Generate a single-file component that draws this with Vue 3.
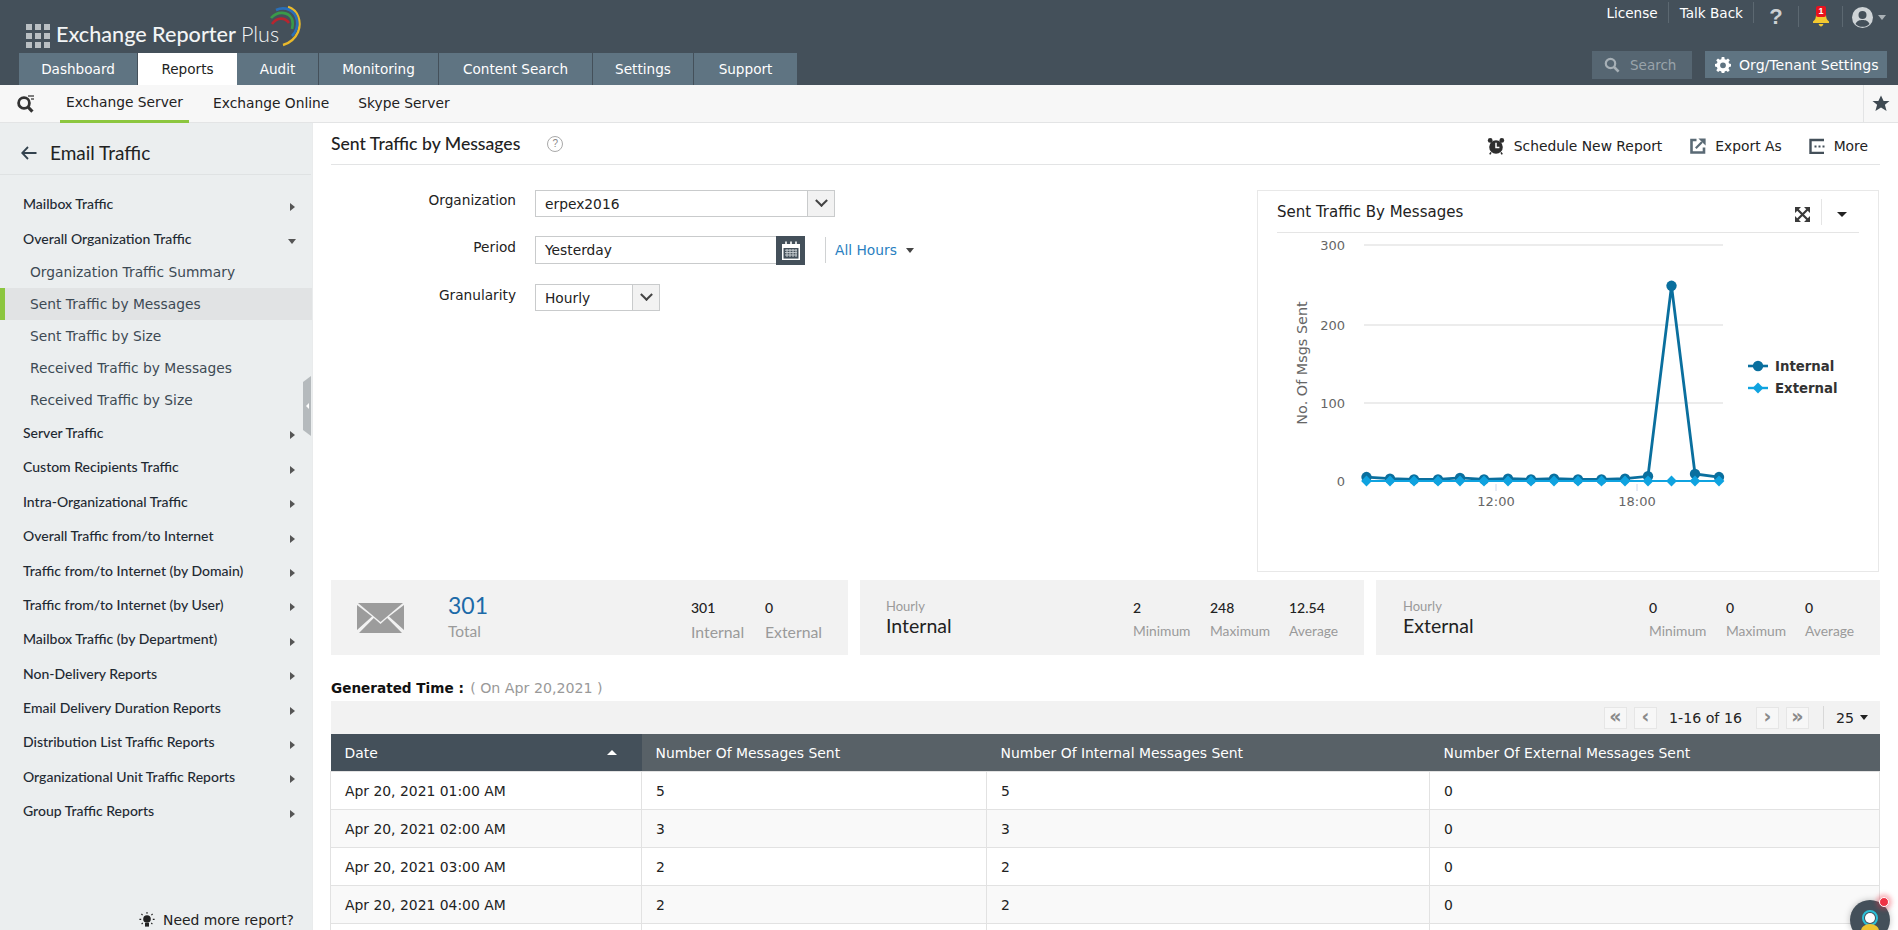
<script setup>
const tabs = ['Dashboard', 'Reports', 'Audit', 'Monitoring', 'Content Search', 'Settings', 'Support']
const subTabs = ['Exchange Server', 'Exchange Online', 'Skype Server']
const nav = [
  { t: 'Mailbox Traffic' },
  { t: 'Overall Organization Traffic', open: true, subs: ['Organization Traffic Summary', 'Sent Traffic by Messages', 'Sent Traffic by Size', 'Received Traffic by Messages', 'Received Traffic by Size'] },
  { t: 'Server Traffic' },
  { t: 'Custom Recipients Traffic' },
  { t: 'Intra-Organizational Traffic' },
  { t: 'Overall Traffic from/to Internet' },
  { t: 'Traffic from/to Internet (by Domain)' },
  { t: 'Traffic from/to Internet (by User)' },
  { t: 'Mailbox Traffic (by Department)' },
  { t: 'Non-Delivery Reports' },
  { t: 'Email Delivery Duration Reports' },
  { t: 'Distribution List Traffic Reports' },
  { t: 'Organizational Unit Traffic Reports' },
  { t: 'Group Traffic Reports' }
]
const rows = [
  ['Apr 20, 2021 01:00 AM', 5, 5, 0],
  ['Apr 20, 2021 02:00 AM', 3, 3, 0],
  ['Apr 20, 2021 03:00 AM', 2, 2, 0],
  ['Apr 20, 2021 04:00 AM', 2, 2, 0],
  ['', '', '', '']
]
const internal = [5, 3, 2, 2, 4, 2, 3, 2, 3, 2, 2, 3, 6, 248, 9, 5]
const xs = [366.5, 390, 414, 438, 460, 484, 508, 531, 554, 578, 601.5, 625, 648, 671.5, 695, 719]
const yOf = v => 481 - v * 0.787
const intPts = internal.map((v, i) => ({ x: xs[i], y: yOf(v) }))
const extPts = xs.map(x => ({ x, y: yOf(0) }))
const poly = p => p.map(o => `${o.x},${o.y}`).join(' ')
const diamond = (x, y, r) => `${x},${y - r} ${x + r},${y} ${x},${y + r} ${x - r},${y}`
const grid = [[245, '300'], [325, '200'], [403, '100'], [481, '0']]
</script>

<template>
  <div class="page">
    <header class="topbar">
      <div class="top-left">
        <div class="logo">
          <div class="dots"><i v-for="n in 9" :key="n"></i></div>
          <span class="logo-text">Exchange Reporter <em>Plus</em></span>
          <svg class="arcs" width="36" height="42" viewBox="0 0 36 42" fill="none">
            <path d="M19 2C29 5 33 17 29 27C26 34 21 38 14 40" stroke="#e9b92b" stroke-width="2.4"/>
            <path d="M7 5C16 1 26 5 28 15C29 21 27 27 23 31" stroke="#2a6fb8" stroke-width="2.6"/>
            <path d="M2 13C8 6 19 6 23 14C24 17 24 20 23 24" stroke="#3a9a4a" stroke-width="2.6"/>
            <path d="M3 19C8 12 16 12 20 18" stroke="#b8252f" stroke-width="2.6"/>
          </svg>
        </div>
        <nav class="tabs">
          <a v-for="t in tabs" :key="t" class="tab" :class="{ active: t === 'Reports' }">{{ t }}</a>
        </nav>
      </div>
      <div class="top-right">
        <div class="links">
          <span class="link">License</span>
          <span class="link">Talk Back</span>
          <span class="link help">?</span>
          <span class="link bell">
            <svg width="18" height="20" viewBox="0 0 18 20"><path d="M9 2C5.6 2 4 4.6 4 7.6C4 11.6 3 13 1 14.6V16H17V14.6C15 13 14 11.6 14 7.6C14 4.6 12.4 2 9 2Z" fill="#f4c92f"/><path d="M6.6 17H11.4C11 18.6 10 19.4 9 19.4C8 19.4 7 18.6 6.6 17Z" fill="#f4c92f"/></svg>
            <b class="badge">1</b>
          </span>
          <span class="link user">
            <svg width="21" height="21" viewBox="0 0 21 21"><circle cx="10.5" cy="10.5" r="10.5" fill="#cfd4d7"/><circle cx="10.5" cy="8" r="4" fill="#44505a"/><path d="M3.5 17C5 13.6 7.5 13 10.5 13S16 13.6 17.5 17C15.6 19 13 19.8 10.5 19.8S5.4 19 3.5 17Z" fill="#44505a"/></svg>
            <i class="caret light"></i>
          </span>
        </div>
        <div class="tools">
          <div class="search">
            <svg width="16" height="16" viewBox="0 0 16 16" fill="none"><circle cx="6.5" cy="6.5" r="4.7" stroke="#a7b0b6" stroke-width="2.2"/><path d="M10 10L14.6 14.6" stroke="#a7b0b6" stroke-width="2.6"/></svg>
            <span>Search</span>
          </div>
          <div class="org">
            <svg width="16" height="16" viewBox="0 0 16 16"><path fill="#fff" fill-rule="evenodd" d="M6.7 0H9.3L9.7 2.2L11.2 2.8L13 1.5L14.8 3.3L13.5 5.1L14.1 6.6L16 7V9.6L14.1 10L13.5 11.5L14.7 13.2L12.9 15L11.2 13.8L9.7 14.4L9.3 16H6.7L6.3 14.4L4.8 13.8L3.1 15L1.3 13.2L2.5 11.5L1.9 10L0 9.6V7L1.9 6.6L2.5 5.1L1.2 3.3L3 1.5L4.8 2.8L6.3 2.2ZM8 5.4A2.9 2.9 0 1 0 8 11.2A2.9 2.9 0 1 0 8 5.4Z"/></svg>
            <span>Org/Tenant Settings</span>
          </div>
        </div>
      </div>
    </header>

    <div class="subnav">
      <div class="subsearch">
        <svg width="20" height="19" viewBox="0 0 20 19" fill="none"><circle cx="8" cy="9" r="5.4" stroke="#333" stroke-width="2.8"/><path d="M12 13L16.4 17.6" stroke="#333" stroke-width="3.2"/><path d="M12 2H18M15 5H18" stroke="#555" stroke-width="1.3"/></svg>
      </div>
      <a v-for="(s, i) in subTabs" :key="s" class="subtab" :class="{ active: i === 0 }">{{ s }}</a>
      <div class="fav">
        <svg width="18" height="17" viewBox="0 0 18 17"><path d="M9 0.5L11.6 6H17.5L12.9 9.8L14.6 16L9 12.4L3.4 16L5.1 9.8L0.5 6H6.4Z" fill="#3f4a52"/></svg>
      </div>
    </div>

    <div class="body">
      <aside class="sidebar">
        <div class="side-head">
          <svg width="16" height="14" viewBox="0 0 16 14" fill="none"><path d="M15.5 7H1.5M7 1L1.2 7L7 13" stroke="#33424e" stroke-width="1.8"/></svg>
          <span>Email Traffic</span>
        </div>
        <ul class="menu">
          <template v-for="n in nav" :key="n.t">
            <li class="item">
              <span>{{ n.t }}</span>
              <i :class="n.open ? 'tri-down' : 'tri-right'"></i>
            </li>
            <template v-if="n.subs">
              <li v-for="s in n.subs" :key="s" class="sub" :class="{ selected: s === 'Sent Traffic by Messages' }">{{ s }}</li>
            </template>
          </template>
        </ul>
        <div class="need">
          <svg width="16" height="16" viewBox="0 0 16 16"><circle cx="8" cy="7" r="3.8" fill="#222"/><rect x="6" y="11" width="4" height="3.6" fill="#222"/><path d="M8 0V1.8M2.4 2L3.6 3.2M13.6 2L12.4 3.2M0.4 7.4H2.2M13.8 7.4H15.6M2.6 12L3.8 11M13.4 12L12.2 11" stroke="#222" stroke-width="1.1"/></svg>
          <span>Need more report?</span>
        </div>
        <div class="handle"><i></i></div>
      </aside>

      <main class="main">
        <div class="title-row">
          <h1>Sent Traffic by Messages</h1>
          <span class="q">?</span>
          <div class="actions">
            <span class="action a1">
              <svg width="18" height="18" viewBox="0 0 18 18"><circle cx="9" cy="10" r="6.8" fill="#2e2e2e"/><circle cx="3.2" cy="3.4" r="2.4" fill="#2e2e2e"/><circle cx="14.8" cy="3.4" r="2.4" fill="#2e2e2e"/><path d="M9 5.8V10.4H12.4" stroke="#fff" stroke-width="1.5" fill="none"/><path d="M4 15.4L2.8 17.4M14 15.4L15.2 17.4" stroke="#2e2e2e" stroke-width="1.6"/></svg>
              Schedule New Report
            </span>
            <span class="action a2">
              <svg width="16" height="16" viewBox="0 0 16 16" fill="none"><path d="M6.5 2H1.5V14.5H14V9.5" stroke="#5a6a75" stroke-width="2.6"/><path d="M5.8 10.2L12 4" stroke="#5a6a75" stroke-width="2.2"/><path d="M8.4 0.4H15.6V7.6Z" fill="#5a6a75"/></svg>
              Export As
            </span>
            <span class="action a3">
              <svg width="16" height="16" viewBox="0 0 16 16" fill="none"><path d="M15 2H1.5V15H15" stroke="#44505a" stroke-width="2.4"/><path d="M5.5 8.5H7.5M9.5 8.5H11.5M13.5 8.5H15.5" stroke="#44505a" stroke-width="2.2"/></svg>
              More
            </span>
          </div>
        </div>

        <section class="upper">
          <div class="form">
            <div class="frow r1">
              <label>Organization</label>
              <div class="select w1"><span>erpex2016</span><b><i class="chev"></i></b></div>
            </div>
            <div class="frow r2">
              <label>Period</label>
              <div class="period"><span>Yesterday</span></div>
              <div class="cal">
                <svg width="18" height="19" viewBox="0 0 18 19"><path d="M0 3H18V19H0Z" fill="#fff"/><path d="M1.5 7H16.5V17.6H1.5Z" fill="#44505a"/><path d="M4 0.5V4.5M9 0.5V4.5M14 0.5V4.5" stroke="#fff" stroke-width="1.6"/><path d="M3 9.2H15M3 11.6H15M3 14H15M5 8V16M8 8V16M11 8V16M14 8V16" stroke="#c7cdd1" stroke-width="1"/></svg>
              </div>
              <div class="hours"><span>All Hours</span><i class="caret dark"></i></div>
            </div>
            <div class="frow r3">
              <label>Granularity</label>
              <div class="select w2"><span>Hourly</span><b><i class="chev"></i></b></div>
            </div>
          </div>

          <div class="chart">
            <div class="chart-head">
              <span>Sent Traffic By Messages</span>
              <svg class="expand" width="15" height="15" viewBox="0 0 15 15" fill="none"><path d="M2 2L13 13M13 2L2 13" stroke="#3a3a3a" stroke-width="2.2"/><path d="M0 0H6L0 6ZM15 0V6L9 0ZM0 15V9L6 15ZM15 15H9L15 9Z" fill="#3a3a3a"/></svg>
              <i class="chart-sep"></i>
              <i class="caret black"></i>
            </div>
            <svg class="plot" width="620" height="338" viewBox="258 233 620 338">
              <line v-for="g in grid.slice(0,3)" :key="'l'+g[1]" x1="364" x2="723" :y1="g[0]" :y2="g[0]" stroke="#e6e6e6" stroke-width="1.4"/>
              <text v-for="g in grid" :key="'t'+g[1]" x="345" :y="g[0] + 5" text-anchor="end" class="tick">{{ g[1] }}</text>
              <line x1="496" x2="496" y1="484" y2="491" stroke="#ccd6eb"/>
              <line x1="637" x2="637" y1="484" y2="491" stroke="#ccd6eb"/>
              <text x="496" y="506" text-anchor="middle" class="tick">12:00</text>
              <text x="637" y="506" text-anchor="middle" class="tick">18:00</text>
              <text transform="translate(307 363) rotate(-90)" text-anchor="middle" class="axis">No. Of Msgs Sent</text>
              <polyline :points="poly(intPts)" fill="none" stroke="#0a6f9e" stroke-width="2.8"/>
              <circle v-for="(p, i) in intPts" :key="'c'+i" :cx="p.x" :cy="p.y" r="5.2" fill="#0a6f9e"/>
              <polyline :points="poly(extPts)" fill="none" stroke="#0fa3e0" stroke-width="2"/>
              <polygon v-for="(p, i) in extPts" :key="'d'+i" :points="diamond(p.x, p.y, 5.4)" fill="#0fa3e0"/>
              <line x1="748" x2="768" y1="366" y2="366" stroke="#0a6f9e" stroke-width="2.6"/>
              <circle cx="758" cy="366" r="5.2" fill="#0a6f9e"/>
              <text x="775" y="371" class="legend">Internal</text>
              <line x1="748" x2="768" y1="388" y2="388" stroke="#0fa3e0" stroke-width="2.4"/>
              <polygon :points="diamond(758, 388, 5.4)" fill="#0fa3e0"/>
              <text x="775" y="393" class="legend">External</text>
            </svg>
          </div>
        </section>

        <section class="stats">
          <div class="stat s1">
            <svg class="env" width="47" height="30" viewBox="0 0 47 30"><path d="M1 0H46L23.5 19Z" fill="#9c9c9c"/><path d="M0 2V27L15 13.5ZM47 2V27L32 13.5Z" fill="#9c9c9c"/><path d="M2 30L16.8 15L23.5 21L30.2 15L45 30Z" fill="#9c9c9c"/></svg>
            <div class="total"><strong>301</strong><small>Total</small></div>
            <div class="col c1"><b>301</b><small>Internal</small></div>
            <div class="col c2"><b>0</b><small>External</small></div>
          </div>
          <div class="stat s2">
            <div class="hourly"><small>Hourly</small><span>Internal</span></div>
            <div class="col m1"><b>2</b><small>Minimum</small></div>
            <div class="col m2"><b>248</b><small>Maximum</small></div>
            <div class="col m3"><b>12.54</b><small>Average</small></div>
          </div>
          <div class="stat s3">
            <div class="hourly"><small>Hourly</small><span>External</span></div>
            <div class="col m1"><b>0</b><small>Minimum</small></div>
            <div class="col m2"><b>0</b><small>Maximum</small></div>
            <div class="col m3"><b>0</b><small>Average</small></div>
          </div>
        </section>

        <div class="generated"><b>Generated Time :</b> <span>( On Apr 20,2021 )</span></div>

        <div class="pager">
          <span class="pbtn">«</span>
          <span class="pbtn">‹</span>
          <span class="pinfo">1-16 of 16</span>
          <span class="pbtn">›</span>
          <span class="pbtn">»</span>
          <i class="psep"></i>
          <span class="psize">25</span>
          <i class="caret black small"></i>
        </div>

        <table class="grid">
          <colgroup><col class="k1"><col class="k2"><col class="k3"><col class="k4"></colgroup>
          <thead>
            <tr>
              <th class="sorted"><span>Date</span><i class="tri-up"></i></th>
              <th>Number Of Messages Sent</th>
              <th>Number Of Internal Messages Sent</th>
              <th>Number Of External Messages Sent</th>
            </tr>
          </thead>
          <tbody>
            <tr v-for="(r, n) in rows" :key="n">
              <td v-for="(c, i) in r" :key="i">{{ c }}</td>
            </tr>
          </tbody>
        </table>
      </main>
    </div>

    <div class="bot">
      <svg width="40" height="30" viewBox="0 0 40 30"><circle cx="20" cy="20" r="20" fill="#44505a"/><circle cx="20" cy="18" r="7" fill="none" stroke="#2bc0d8" stroke-width="2"/><circle cx="20" cy="18" r="5" fill="#fff"/><ellipse cx="20" cy="31" rx="9" ry="7" fill="#eec22f"/></svg>
    </div>
    <div class="bot-dot"></div>
  </div>
</template>

<style>
html, body { margin: 0; padding: 0; background: #fff; }
</style>

<style scoped>
.page { position: relative; width: 1898px; height: 930px; overflow: hidden; display: flex; flex-direction: column; font-family: "DejaVu Sans", sans-serif; font-size: 13.8px; color: #222; }
a { cursor: pointer; }

.topbar { height: 85px; flex: none; background: #44505a; display: flex; justify-content: space-between; }
.top-left { padding-left: 19px; display: flex; flex-direction: column; }
.logo { height: 53px; display: flex; align-items: flex-start; position: relative; }
.dots { display: grid; grid-template-columns: repeat(3, 6px); grid-auto-rows: 6px; gap: 3px; margin: 24px 0 0 7px; }
.dots i { background: #b9bfc3; }
.logo-text { font-family: Lato, sans-serif; font-weight: 500; font-size: 21.6px; color: #f2f4f5; margin: 21px 0 0 6px; white-space: nowrap; }
.logo-text em { font-style: normal; font-weight: 300; }
.arcs { margin: 5px 0 0 -10px; }
.tabs { display: flex; height: 32px; }
.tab { background: #5f7482; color: #fff; display: flex; align-items: center; justify-content: center; font-size: 13.6px; border-right: 1px solid #44505a; box-sizing: border-box; }
.tab:nth-child(1) { width: 119px; }
.tab:nth-child(2) { width: 99px; background: #fff; color: #222; border-right: 0; }
.tab:nth-child(3) { width: 82px; }
.tab:nth-child(4) { width: 120px; }
.tab:nth-child(5) { width: 154px; }
.tab:nth-child(6) { width: 101px; }
.tab:nth-child(7) { width: 103px; border-right: 0; }

.top-right { display: flex; flex-direction: column; align-items: flex-end; padding-right: 11px; }
.links { display: flex; height: 25px; margin-top: 4px; align-items: center; color: #fff; }
.link { display: flex; align-items: center; justify-content: center; height: 21px; position: relative; border-right: 1px solid #5c6871; font-size: 13.6px; margin-top: -8px; }
.link:nth-child(1) { padding: 0 10px; }
.link:nth-child(2) { padding: 0 10px 0 11px; }
.help { width: 45px; box-sizing: border-box; font-size: 22px; color: #ccd0d3; font-family: "Liberation Sans", sans-serif; font-weight: 700; margin-top: 0; }
.bell { width: 44px; box-sizing: border-box; margin-top: 0; }
.badge { position: absolute; left: 17px; top: 0; width: 10px; height: 11px; background: #e8121e; border-radius: 2px; font-size: 9px; line-height: 11px; text-align: center; color: #fff; font-family: "Liberation Sans", sans-serif; }
.user { border-right: 0; width: 45px; justify-content: flex-start; padding-left: 9px; box-sizing: border-box; margin-top: 2px; margin-right: -1px; gap: 5px; }
.caret { display: block; width: 0; height: 0; border-left: 4px solid transparent; border-right: 4px solid transparent; border-top: 5px solid #333; }
.caret.light { border-top-color: #aab1b6; }
.tools { margin-top: 22px; display: flex; align-items: flex-start; gap: 13px; }
.search { width: 100px; height: 28px; background: #566672; display: flex; align-items: center; padding-left: 12px; box-sizing: border-box; gap: 10px; color: #99a3aa; font-size: 13.5px; }
.org { width: 182px; height: 27px; background: #5f7482; color: #fff; display: flex; align-items: center; padding-left: 10px; box-sizing: border-box; gap: 8px; font-size: 14.1px; white-space: nowrap; }

.subnav { height: 37px; flex: none; background: #f7f7f7; border-bottom: 1px solid #e3e4e5; box-sizing: content-box; display: flex; position: relative; }
.subsearch { width: 60px; display: flex; align-items: center; padding-left: 16px; box-sizing: border-box; }
.subtab { display: flex; align-items: center; padding: 0 7px 1px; color: #222; position: relative; white-space: nowrap; font-size: 13.8px; }
.subtab.active { padding: 0 0 1px; width: 129px; box-sizing: border-box; justify-content: center; border-bottom: 3px solid #8cc63f; height: 38px; }
.subtab:nth-child(3) { margin-left: 17px; }
.subtab:nth-child(4) { margin-left: 15px; }
.fav { margin-left: auto; width: 35px; border-left: 1px solid #e3e4e5; display: flex; align-items: center; justify-content: center; box-sizing: border-box; }

.body { flex: 1; display: flex; min-height: 0; }
.sidebar { width: 313px; flex: none; background: #ebeeef; position: relative; box-sizing: border-box; border-right: 1px solid #e9ebec; }
.side-head { height: 52px; box-sizing: border-box; border-bottom: 1px solid #dfe2e3; display: flex; align-items: center; padding: 8px 0 0 21px; gap: 13px; margin-right: 1px; }
.side-head span { font-family: Lato, sans-serif; font-size: 19px; color: #222; }
.menu { list-style: none; margin: 0; padding: 12px 0 0; font-family: Lato, sans-serif; }
.item { height: 34.4px; box-sizing: border-box; display: flex; align-items: center; justify-content: space-between; padding: 0 17px 1px 23px; font-size: 14px; color: #1f2a33; font-weight: 500; }
.sub { height: 32px; line-height: 32px; padding-left: 30px; font-family: "DejaVu Sans", sans-serif; font-size: 13.8px; color: #3d4a54; }
.sub.selected { background: #e1e3e4; box-shadow: inset 5px 0 0 #8cc63f; }
.tri-right { display: block; margin-top: 6px; width: 0; height: 0; border-top: 4px solid transparent; border-bottom: 4px solid transparent; border-left: 5px solid #555; }
.tri-down { display: block; margin: 6px -1px 0 0; width: 0; height: 0; border-left: 4px solid transparent; border-right: 4px solid transparent; border-top: 5px solid #555; }
.need { position: absolute; right: 18px; bottom: 2px; display: flex; align-items: center; gap: 8px; font-size: 13.9px; color: #222; }
.handle { position: absolute; right: 1px; top: 253px; width: 8px; height: 60px; background: #b5babd; clip-path: polygon(0 10%, 100% 0, 100% 100%, 0 90%); display: flex; align-items: center; justify-content: center; }
.handle i { display: block; width: 0; height: 0; border-top: 3px solid transparent; border-bottom: 3px solid transparent; border-right: 3px solid #fff; }

.main { flex: 1; min-width: 0; padding: 0 18px 0 18px; display: flex; flex-direction: column; overflow: hidden; }
.title-row { height: 42px; flex: none; box-sizing: border-box; border-bottom: 1px solid #e3e4e5; display: flex; align-items: center; }
h1 { margin: 0 0 1px; font-family: Lato, sans-serif; font-weight: 500; font-size: 17.6px; color: #222; }
.q { width: 14px; height: 14px; margin-left: 27px; border: 1.5px solid #a9a9a9; border-radius: 50%; font-size: 10px; line-height: 14px; text-align: center; color: #888; font-family: "Liberation Sans", sans-serif; }
.actions { display: flex; margin: 4px 12px 0 auto; }
.action { display: flex; align-items: center; gap: 9px; font-size: 13.85px; white-space: nowrap; }
.a2 { margin-left: 28px; }
.a3 { margin-left: 27px; }

.upper { display: flex; height: 382px; flex: none; margin-top: 25px; justify-content: space-between; }
.form { display: flex; flex-direction: column; }
.frow { display: flex; align-items: center; }
.frow label { width: 185px; text-align: right; margin-right: 19px; font-size: 13.7px; margin-top: -7px; }
.r1 { height: 27px; }
.r2 { height: 28px; margin-top: 19px; }
.r3 { height: 27px; margin-top: 20px; }
.r3 label { margin-top: -5px; }
.select { height: 27px; display: flex; border: 1px solid #c9cbcc; box-sizing: border-box; background: #fff; }
.select span { flex: 1; padding-left: 9px; line-height: 26px; }
.select b { width: 27px; background: #f2f2f2; border-left: 1px solid #c9cbcc; display: flex; align-items: center; justify-content: center; box-sizing: border-box; }
.w1 { width: 300px; }
.w2 { width: 125px; }
.chev { display: block; width: 9px; height: 9px; border-right: 2.6px solid #444; border-bottom: 2.6px solid #444; transform: rotate(45deg) translate(-2px, -2px); box-sizing: border-box; }
.period { width: 241px; height: 28px; border: 1px solid #c9cbcc; border-right: 0; box-sizing: border-box; padding-left: 9px; line-height: 26px; }
.cal { width: 29px; height: 29px; background: #44505a; display: flex; align-items: center; justify-content: center; }
.hours { margin-left: 20px; border-left: 1px solid #d0d2d3; height: 26px; padding-left: 9px; display: flex; align-items: center; gap: 9px; color: #2a7fc1; white-space: nowrap; }
.caret.dark { border-top-color: #444; }
.chart { width: 622px; height: 382px; margin-right: 1px; box-sizing: border-box; border: 1px solid #e8e8e8; position: relative; }
.chart-head { margin: 0 19px; height: 42px; border-bottom: 1px solid #e5e5e5; display: flex; align-items: center; color: #222; box-sizing: border-box; }
.chart-head span { flex: 1; font-size: 15px; margin-top: 1px; }
.expand { margin: 5px -1px 0 0; }
.chart-sep { width: 1px; height: 26px; background: #e5e5e5; margin: 0 0 0 12px; }
.caret.black { border-top-color: #222; margin: 5px 12px 0 15px; border-left-width: 5px; border-right-width: 5px; }
.plot { display: block; }
.tick { font: 13px "DejaVu Sans", sans-serif; fill: #666; }
.axis { font: 14.4px "DejaVu Sans", sans-serif; fill: #666; }
.legend { font: 700 13.3px "DejaVu Sans", sans-serif; fill: #333; }

.stats { margin-top: 8px; height: 75px; flex: none; display: flex; gap: 12px; }
.stat { background: #f2f2f2; position: relative; display: flex; }
.s1 { width: 517px; }
.s2 { width: 504px; }
.s3 { width: 504px; }
.stats small { display: block; color: #9a9a9a; font-family: Lato, sans-serif; font-size: 13.8px; }
.s1 small { font-size: 15.8px; }
.env { margin: 23px 0 0 26px; }
.total { margin: 10px 0 0 44px; width: 243px; }
.total strong { display: block; font-family: Lato, sans-serif; font-weight: 400; font-size: 23px; line-height: 30px; color: #1c6aa8; }
.total small { font-size: 15.5px; margin-top: 2px; }
.col { padding-top: 19px; }
.col b { display: block; font-family: Lato, sans-serif; font-weight: 500; font-size: 14px; line-height: 17px; color: #222; }
.col small { margin-top: 6px; white-space: nowrap; }
.c1 { width: 74px; }
.hourly { padding: 18px 0 0 26px; width: 247px; box-sizing: content-box; }
.s3 .hourly { padding-left: 27px; width: 246px; }
.hourly small { font-size: 13px; line-height: 16px; }
.hourly span { display: block; font-family: Lato, sans-serif; font-size: 19.5px; line-height: 24px; color: #222; }
.m1 { width: 77px; }
.m2 { width: 79px; }

.generated { height: 46px; flex: none; box-sizing: border-box; padding-top: 25px; font-size: 13.6px; white-space: nowrap; }
.generated b { font-weight: 700; color: #111; }
.generated span { color: #999; margin-left: 2px; font-size: 14.2px; }
.pager { height: 33px; flex: none; background: #f2f2f2; display: flex; align-items: center; padding-right: 12px; justify-content: flex-end; }
.pbtn { width: 23px; height: 22px; background: #f7f7f7; border: 1px solid #e6e6e6; box-sizing: border-box; display: flex; align-items: center; justify-content: center; color: #8a8a8a; font-weight: 700; font-size: 19px; line-height: 16px; margin-left: 7px; padding-bottom: 3px; }
.pinfo { margin: 0 7px 0 12px; color: #222; font-size: 14.2px; white-space: nowrap; }
.psep { width: 1px; height: 23px; background: #d8d8d8; margin: 0 12px 0 14px; }
.psize { color: #222; font-size: 14.2px; }
.caret.small { margin: 0 0 0 6px; border-top-color: #222; border-left-width: 4px; border-right-width: 4px; }

table.grid { border-collapse: collapse; table-layout: fixed; width: 1549px; flex: none; margin-left: -1px; }
.k1 { width: 311px; }
.k2 { width: 345px; }
.k3 { width: 443px; }
.k4 { width: 450px; }
th { height: 37px; padding: 0 14px; background: #586167; color: #fff; font-weight: 400; font-size: 13.9px; text-align: left; white-space: nowrap; }
th.sorted { background: #44505a; position: relative; }
.tri-up { position: absolute; right: 25px; top: 16px; width: 0; height: 0; border-left: 5px solid transparent; border-right: 5px solid transparent; border-bottom: 5px solid #fff; }
td { height: 38px; box-sizing: border-box; padding: 0 14px; border: 1px solid #e2e2e2; font-size: 13.9px; color: #222; }
tbody tr:nth-child(even) td { background: #f9f9f9; }

.bot { position: absolute; right: 8px; bottom: 0; width: 40px; height: 30px; filter: drop-shadow(0 0 3px rgba(0,0,0,.25)); }
.bot-dot { position: absolute; right: 9px; bottom: 23px; width: 8px; height: 8px; border-radius: 50%; background: #ee3344; border: 1px solid #fff; box-shadow: 0 0 4px 3px rgba(238,51,68,.35); }
</style>
